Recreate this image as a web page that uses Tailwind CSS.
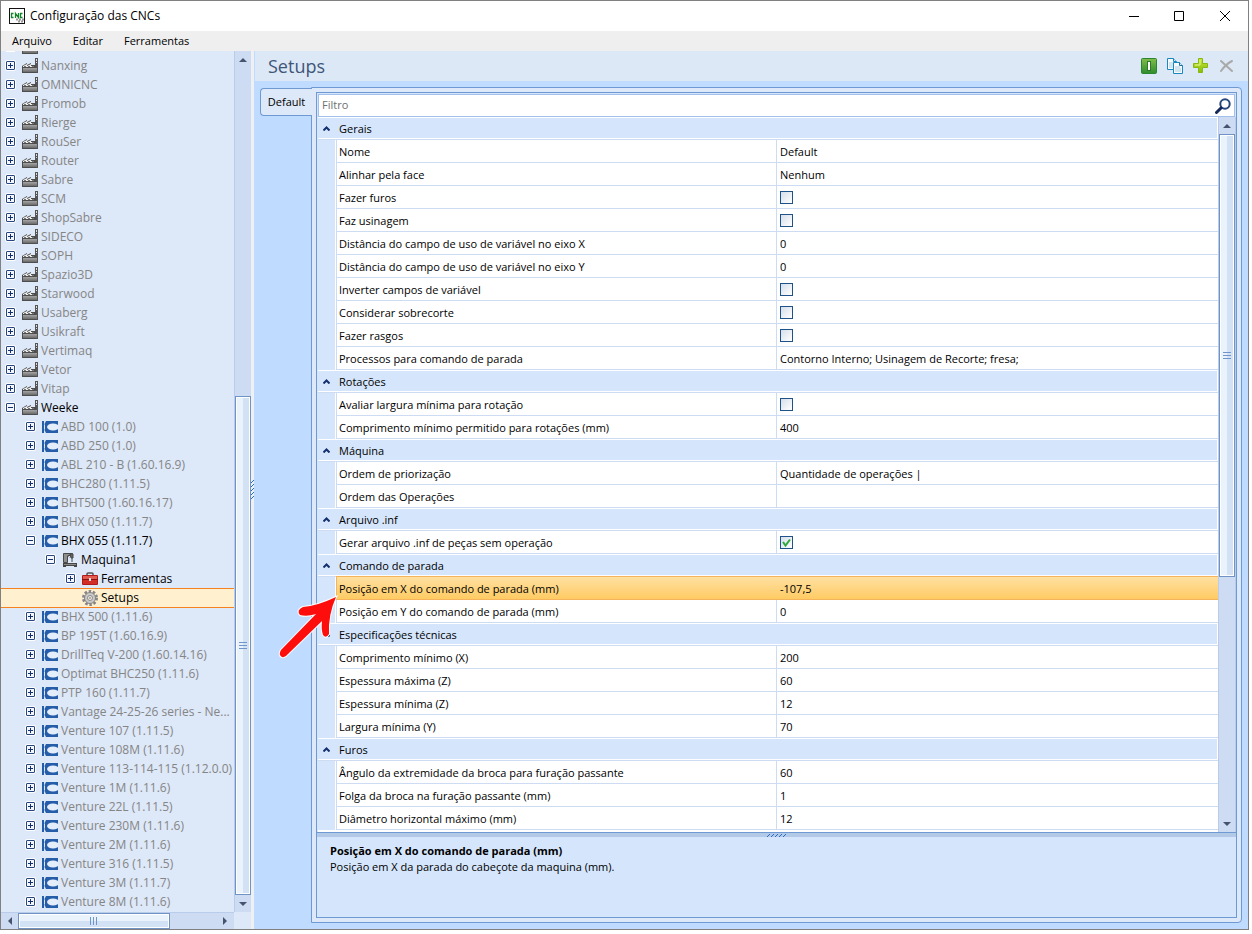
<!DOCTYPE html>
<html lang="pt-BR">
<head>
    <meta charset="UTF-8">
    <meta name="viewport" content="width=device-width, initial-scale=1.0">
    <title>Configuração das CNCs</title>
    <script src="https://cdn.jsdelivr.net/npm/@tailwindcss/browser@4"></script>
</head>
<body class="flex h-screen bg-white pr-[3px] pb-1 font-['Open_Sans','Noto_Sans',sans-serif] text-[11px] text-black">
    <svg class="absolute h-0 w-0">
        <defs>
            <linearGradient id="metal" x1="0" y1="0" x2="0" y2="1">
                <stop offset="0" stop-color="#a5a5a5"/>
                <stop offset="1" stop-color="#6a6a6a"/>
            </linearGradient>
            <linearGradient id="green" x1="0" y1="0" x2="0" y2="1">
                <stop offset="0" stop-color="#80bd4c"/>
                <stop offset="1" stop-color="#2f8c2c"/>
            </linearGradient>
            <linearGradient id="lime" x1="0" y1="0" x2="0" y2="1">
                <stop offset="0" stop-color="#c8e638"/>
                <stop offset="1" stop-color="#86bd0c"/>
            </linearGradient>
        </defs>
        <symbol id="icon-factory" viewBox="0 0 16 16">
            <path d="M13 0h3v15h-3z" fill="#555"/>
            <path d="M14 1h1v2h-1zM14 4h1v1h-1z" fill="#ddd"/>
            <path d="M0 15V8l5-3v2l4-2v2h5v8z" fill="#4d4d4d"/>
            <path d="M1 8l4-2v2l4-2v2h3v1H1z" fill="#ededed"/>
            <path d="M2 8.500h2M6 8.500h2M10 8.500h2" stroke="#777"/>
            <path d="M1 10h14v4H1z" fill="url(#metal)"/>
        </symbol>
        <symbol id="icon-model" viewBox="0 0 16 16">
            <path d="M0 2h2v4l2-4h12v12H4l-2-4v4H0z" fill="#255da9"/>
            <path d="M2 6l1-1v6l-1-1z" fill="#dde8f8"/>
            <ellipse cx="11" cy="8" rx="6" ry="3.500" fill="#e4edfa"/>
        </symbol>
        <symbol id="icon-machine" viewBox="0 0 16 16">
            <path d="M1.500 1.500h9v2h-5v7h-4z" fill="#8f8f8f" stroke="#484848"/>
            <path d="M5.500 3.500l2 2" stroke="#999"/>
            <path d="M8 2h3v4H9zM10 6v4" fill="#666" stroke="#484848"/>
            <path d="M1 11h14v4h-3v-1H4v1H1z" fill="#454545"/>
            <path d="M2 12.500h12" stroke="#8c8c8c"/>
        </symbol>
        <symbol id="icon-toolbox" viewBox="0 0 16 16">
            <path d="M5 5V3q0-1 1-1h4q1 0 1 1v2" fill="none" stroke="#555" stroke-width="1.500"/>
            <rect x="0" y="4" width="16" height="10" rx="1" fill="#b01c1c"/>
            <path d="M1 5h14v3H1z" fill="#e35a50"/>
            <path d="M1 9h14v4H1z" fill="#d22e28"/>
            <path d="M0 8.500h16" stroke="#8b1111"/>
            <path d="M7 7h2v3H7z" fill="#f6e0dc"/>
        </symbol>
        <symbol id="icon-gear" viewBox="0 0 16 16">
            <circle cx="8" cy="8" r="6.500" fill="none" stroke="#868686" stroke-width="3" stroke-dasharray="2.400 1.680"/>
            <circle cx="8" cy="8" r="5.500" fill="#c9c9c9" stroke="#858585"/>
            <circle cx="8" cy="8" r="2.500" fill="#ececec" stroke="#8c8c8c"/>
            <circle cx="8" cy="8" r="1" fill="#b09a72"/>
        </symbol>
        <symbol id="icon-grip" viewBox="0 0 8 8">
            <path d="M0 1.500h8M0 4.500h8M0 7.500h8" stroke="#6e95cc"/>
        </symbol>
    </svg>

    <div class="relative flex min-w-0 grow flex-col border border-[#808080] bg-white">
        <header class="flex h-[30px] shrink-0 items-center pl-2">
            <svg class="h-4 w-4" viewBox="0 0 16 16">
                <rect x=".5" y=".5" width="15" height="15" fill="#fff" stroke="#111"/>
                <path d="M4.500 5.500H2.500V9.500H4.500M6.500 10V5.500L9.500 9.500V5M13.500 5.500H11.500V9.500H13.500" fill="none" stroke="#14862a" stroke-width="1.300"/>
                <path d="M7 11.500h8M9 13.500h6" stroke="#999" stroke-width="2" stroke-dasharray="2 1"/>
            </svg>
            <h1 class="ml-[5px] grow text-xs">Configuração das CNCs</h1>
            <button class="flex h-full w-11 items-center justify-center" aria-label="Minimizar">
                <svg class="h-[10px] w-[10px]" viewBox="0 0 10 10"><path d="M0 5.500h10" stroke="#000"/></svg>
            </button>
            <button class="flex h-full w-[46px] items-center justify-center" aria-label="Maximizar">
                <svg class="h-[10px] w-[10px]" viewBox="0 0 10 10"><path d="M.5.5h9v9h-9z" fill="none" stroke="#000"/></svg>
            </button>
            <button class="flex h-full w-[46px] items-center justify-center" aria-label="Fechar">
                <svg class="h-[10px] w-[10px]" viewBox="0 0 10 10"><path d="M0 0l10 10M10 0L0 10" stroke="#000"/></svg>
            </button>
        </header>

        <nav class="flex h-5 shrink-0 items-center gap-[21px] bg-[#efefef] pl-[11px]">
            <button>Arquivo</button>
            <button>Editar</button>
            <button>Ferramentas</button>
        </nav>

        <div class="flex min-h-0 grow bg-[#bfdbff]">
            <aside class="flex w-[250px] shrink-0 flex-col bg-[#dde8f8]">
                <div class="flex min-h-0 grow">
                    <ul id="tree" class="flex min-w-0 grow flex-col justify-end overflow-hidden pb-px text-xs text-[#858585]"></ul>
                    <div class="flex w-[17px] shrink-0 flex-col border-l border-[#b9cdea] bg-[#cddcf3]">
                        <button class="flex h-[17px] shrink-0 items-center justify-center" aria-label="Rolar para cima">
                            <svg class="h-1 w-2" viewBox="0 0 8 4"><path d="M0 4l4-4 4 4z" fill="#47536e"/></svg>
                        </button>
                        <div class="flex grow flex-col justify-end">
                            <div class="flex h-[60.4%] items-center justify-center border border-[#6f93c4] bg-linear-to-r from-[#eaf2fc] from-50% to-[#d3e1f5] to-50% shadow-[inset_0_0_0_1px_#fff]">
                                <svg class="h-2 w-2"><use href="#icon-grip"/></svg>
                            </div>
                        </div>
                        <button class="flex h-[17px] shrink-0 items-center justify-center" aria-label="Rolar para baixo">
                            <svg class="h-1 w-2" viewBox="0 0 8 4"><path d="M0 0l4 4 4-4z" fill="#47536e"/></svg>
                        </button>
                    </div>
                </div>
                <div class="flex h-[17px] shrink-0">
                    <div class="flex grow border-t border-[#b9cdea] bg-[#cddcf3]">
                        <button class="flex w-[17px] items-center justify-center" aria-label="Rolar para a esquerda">
                            <svg class="h-2 w-1" viewBox="0 0 4 8"><path d="M4 0L0 4l4 4z" fill="#47536e"/></svg>
                        </button>
                        <div class="grow">
                            <div class="flex h-full w-[77%] items-center justify-center border border-[#6f93c4] bg-linear-to-b from-[#eaf2fc] from-50% to-[#d3e1f5] to-50% shadow-[inset_0_0_0_1px_#fff]">
                                <svg class="h-2 w-2 rotate-90"><use href="#icon-grip"/></svg>
                            </div>
                        </div>
                        <button class="flex w-[18px] items-center justify-center" aria-label="Rolar para a direita">
                            <svg class="h-2 w-1" viewBox="0 0 4 8"><path d="M0 0l4 4-4 4z" fill="#47536e"/></svg>
                        </button>
                    </div>
                    <div class="w-[17px]"></div>
                </div>
            </aside>

            <div class="flex w-[3px] shrink-0 items-center bg-[#eef0f2]">
                <svg class="h-5 w-[3px]" viewBox="0 0 3 20">
                    <path d="M0 3l3-3M0 7l3-3M0 11l3-3M0 15l3-3M0 19l3-3" stroke="#2b6cc4"/>
                </svg>
            </div>

            <main class="flex min-w-0 grow flex-col border-l border-[#bfdbff]">
                <div class="flex h-[30px] shrink-0 items-center gap-[10px] bg-[#dde8f6] px-[13px]">
                    <h2 class="grow text-lg text-[#3f5678]">Setups</h2>
                    <button aria-label="Ativar">
                        <svg class="h-4 w-4" viewBox="0 0 16 16">
                            <rect x=".5" y=".5" width="15" height="15" rx="1" fill="url(#green)" stroke="#2c852f"/>
                            <path d="M6 3h4v10H6z" fill="#2c7a28"/>
                            <path d="M7 4h2v8H7z" fill="#fff"/>
                        </svg>
                    </button>
                    <button aria-label="Copiar">
                        <svg class="h-4 w-4" viewBox="0 0 16 16">
                            <path d="M.5.500h6l3 3v8h-9z" fill="#f4fafd" stroke="#1c87be"/>
                            <path d="M2 5h4M2 7h4M2 9h4" stroke="#a8cfe2"/>
                            <path d="M6.500.5v3h3" fill="#d5ecf8" stroke="#1c87be"/>
                            <path d="M6.500 4.500h6l3 3v8h-9z" fill="#f4fafd" stroke="#1c87be"/>
                            <path d="M12.500 4.500v3h3" fill="#d5ecf8" stroke="#1c6da0"/>
                            <path d="M8 9h5M8 11h6M8 13h6" stroke="#a8cfe2"/>
                        </svg>
                    </button>
                    <button aria-label="Adicionar">
                        <svg class="h-4 w-4" viewBox="0 0 16 16">
                            <path d="M5.500.5h4v5h5v4h-5v5h-4v-5h-5v-4h5z" fill="url(#lime)" stroke="#86b812"/>
                            <path d="M7 2v5H2" fill="none" stroke="#e6f694"/>
                        </svg>
                    </button>
                    <button aria-label="Remover">
                        <svg class="h-4 w-4" viewBox="0 0 16 16">
                            <path d="M2 3l11 10M13 3Q7 6 2 13" fill="none" stroke="#a9a9a9" stroke-width="2" stroke-linecap="round"/>
                        </svg>
                    </button>
                </div>

                <div class="flex min-h-0 grow pt-1.5 pr-1.5 pb-1.5 pl-[5px]">
                    <button class="z-10 mt-px -mr-px h-7 w-[52px] shrink-0 rounded-l border border-r-0 border-[#6f99d2] bg-[#dde8f8]">Default</button>
                    <section class="flex min-w-0 grow rounded-r border border-[#6f99d2] bg-[#dde8f8] p-1">
                        <div class="flex min-w-0 grow flex-col border border-[#6f99d2] bg-[#d5e6fc]">
                            <label class="m-px mb-0 flex h-[23px] shrink-0 items-center border border-[#a3c0ec] bg-white pr-[3px]">
                                <input type="text" placeholder="Filtro" aria-label="Filtro" class="min-w-0 grow bg-transparent px-[3px] text-[11px] outline-none placeholder:text-[#707070]">
                                <svg class="h-4 w-4" viewBox="0 0 16 16">
                                    <circle cx="10" cy="6" r="4.700" fill="#fff" stroke="#25467e" stroke-width="2"/>
                                    <path d="M6 10l-4.500 4.500" stroke="#14285c" stroke-width="3" stroke-linecap="round"/>
                                </svg>
                            </label>
                            <div class="flex min-h-0 grow pl-px">
                                <div class="min-w-0 grow overflow-hidden bg-white">
                                    <table class="w-full table-fixed border-separate border-spacing-0 text-left leading-none">
                                        <colgroup>
                                            <col class="w-[18px]">
                                            <col>
                                            <col>
                                        </colgroup>
                                        <tbody id="properties"></tbody>
                                    </table>
                                </div>
                                <div class="flex w-[18px] shrink-0 flex-col border-x border-[#b9cdea] bg-[#cddcf3]">
                                    <button class="flex h-[17px] shrink-0 items-center justify-center" aria-label="Rolar para cima">
                                        <svg class="h-1 w-2" viewBox="0 0 8 4"><path d="M0 4l4-4 4 4z" fill="#47536e"/></svg>
                                    </button>
                                    <div class="grow">
                                        <div class="flex h-[65%] items-center justify-center border border-[#6f93c4] bg-linear-to-r from-[#eaf2fc] from-50% to-[#d3e1f5] to-50% shadow-[inset_0_0_0_1px_#fff]">
                                            <svg class="h-2 w-2"><use href="#icon-grip"/></svg>
                                        </div>
                                    </div>
                                    <button class="flex h-[17px] shrink-0 items-center justify-center" aria-label="Rolar para baixo">
                                        <svg class="h-1 w-2" viewBox="0 0 8 4"><path d="M0 0l4 4 4-4z" fill="#47536e"/></svg>
                                    </button>
                                </div>
                            </div>
                            <div class="flex h-[5px] shrink-0 items-center justify-center border-t border-[#6f99d2] bg-[#b3c9e8]">
                                <svg class="h-[3px] w-5" viewBox="0 0 20 3">
                                    <path d="M0 3l3-3M4 3l3-3M8 3l3-3M12 3l3-3M16 3l3-3" stroke="#2b6cc4"/>
                                </svg>
                            </div>
                            <div class="h-20 shrink-0 px-[13px] pt-1.5">
                                <p class="leading-4 font-bold">Posição em X do comando de parada (mm)</p>
                                <p class="leading-4">Posição em X da parada do cabeçote da maquina (mm).</p>
                            </div>
                        </div>
                    </section>
                </div>
            </main>
        </div>

        <!-- Arrow pointing at the selected property -->
        <svg class="pointer-events-none absolute top-[594px] left-[276px] z-20 h-16 w-16" viewBox="0 0 64 64">
            <path d="M59 2Q40 11 26 12Q19 15 23 20Q30 22 39 19L4 55Q1 60 5 62Q8 63 11 59L45 26Q44 34 46 40Q49 44 52 39Q51 20 59 2z" fill="#fe0d0d" stroke="#fff" stroke-width="2" paint-order="stroke"/>
        </svg>
    </div>

    <script>
        // [depth, icon, label, state]
        const tree = [
            ...['', 'Nanxing', 'OMNICNC', 'Promob', 'Rierge', 'RouSer', 'Router', 'Sabre', 'SCM',
                'ShopSabre', 'SIDECO', 'SOPH', 'Spazio3D', 'Starwood', 'Usaberg', 'Usikraft', 'Vertimaq',
                'Vetor', 'Vitap'].map(name => [0, 'factory', name, 'closed']),
            [0, 'factory', 'Weeke', 'open'],
            ...['ABD 100 (1.0)', 'ABD 250 (1.0)', 'ABL 210 - B (1.60.16.9)', 'BHC280 (1.11.5)',
                'BHT500 (1.60.16.17)', 'BHX 050 (1.11.7)'].map(name => [1, 'model', name, 'closed']),
            [1, 'model', 'BHX 055 (1.11.7)', 'open'],
            [2, 'machine', 'Maquina1', 'open'],
            [3, 'toolbox', 'Ferramentas', 'closed'],
            [3, 'gear', 'Setups', 'selected'],
            ...['BHX 500 (1.11.6)', 'BP 195T (1.60.16.9)', 'DrillTeq V-200 (1.60.14.16)',
                'Optimat BHC250 (1.11.6)', 'PTP 160 (1.11.7)', 'Vantage 24-25-26 series - Ne...',
                'Venture 107 (1.11.5)', 'Venture 108M (1.11.6)', 'Venture 113-114-115 (1.12.0.0)',
                'Venture 1M (1.11.6)', 'Venture 22L (1.11.5)', 'Venture 230M (1.11.6)', 'Venture 2M (1.11.6)',
                'Venture 316 (1.11.5)', 'Venture 3M (1.11.7)', 'Venture 8M (1.11.6)'].map(name => [1, 'model', name, 'closed']),
        ];
        const indent = ['pl-[5px]', 'pl-[25px]', 'pl-[45px]', 'pl-[65px]'];

        const properties = [
            ['Gerais', [
                ['Nome', 'Default'],
                ['Alinhar pela face', 'Nenhum'],
                ['Fazer furos', false],
                ['Faz usinagem', false],
                ['Distância do campo de uso de variável no eixo X', '0'],
                ['Distância do campo de uso de variável no eixo Y', '0'],
                ['Inverter campos de variável', false],
                ['Considerar sobrecorte', false],
                ['Fazer rasgos', false],
                ['Processos para comando de parada', 'Contorno Interno; Usinagem de Recorte; fresa;'],
            ]],
            ['Rotações', [
                ['Avaliar largura mínima para rotação', false],
                ['Comprimento mínimo permitido para rotações (mm)', '400'],
            ]],
            ['Máquina', [
                ['Ordem de priorização', 'Quantidade de operações |'],
                ['Ordem das Operações', ''],
            ]],
            ['Arquivo .inf', [
                ['Gerar arquivo .inf de peças sem operação', true],
            ]],
            ['Comando de parada', [
                ['Posição em X do comando de parada (mm)', '-107,5', 'selected'],
                ['Posição em Y do comando de parada (mm)', '0'],
            ]],
            ['Especificações técnicas', [
                ['Comprimento mínimo (X)', '200'],
                ['Espessura máxima (Z)', '60'],
                ['Espessura mínima (Z)', '12'],
                ['Largura mínima (Y)', '70'],
            ]],
            ['Furos', [
                ['Ângulo da extremidade da broca para furação passante', '60'],
                ['Folga da broca na furação passante (mm)', '1'],
                ['Diâmetro horizontal máximo (mm)', '12'],
            ]],
        ];

        document.getElementById('tree').innerHTML = tree.map(([depth, icon, label, state]) => {
            const isSelected = state === 'selected';
            const isActive = isSelected || state === 'open' || depth === 3;
            const expander = isSelected ? '<span class="w-[9px]"></span>' : `
                <button class="h-[9px] w-[9px] shrink-0 rounded-[1px] bg-white outline outline-white" aria-label="Expandir ${label}">
                    <svg class="h-[9px] w-[9px]" viewBox="0 0 9 9">
                        <path d="M.5.5h8v8h-8z" fill="#f4f8fe" stroke="#27467f"/>
                        <path d="${state === 'open' ? 'M2 4.500h5' : 'M2 4.500h5M4.500 2v5'}" stroke="#142f6e"/>
                    </svg>
                </button>`;
            return `
                <li class="relative flex h-[19px] shrink-0 items-center whitespace-nowrap ${indent[depth]} ${isActive ? 'text-black' : ''} ${isSelected ? 'bg-[#fff0cf] shadow-[inset_0_1px_#f58220,0_1px_#f58220]' : ''}">
                    ${expander}
                    <svg class="mr-[3px] ml-[7px] h-4 w-4 shrink-0"><use href="#icon-${icon}"/></svg>
                    <span>${label}</span>
                </li>`;
        }).join('');

        let fieldCount = 0;

        function renderValue(id, value) {
            if (typeof value !== 'boolean') {
                return value;
            }
            return `
                <span class="relative block h-[13px] w-[13px]">
                    <input type="checkbox" id="${id}" ${value ? 'checked' : ''} class="peer block h-[13px] w-[13px] appearance-none border border-[#1f5289] bg-linear-to-br from-[#d6deea] to-white">
                    <svg class="pointer-events-none absolute inset-0 hidden peer-checked:block" viewBox="0 0 13 13">
                        <path d="M3 6l2.500 3.500L10 3.500" fill="none" stroke="#2fa83c" stroke-width="2"/>
                    </svg>
                </span>`;
        }

        function renderRow([label, value, state]) {
            const id = `field${fieldCount++}`;
            const cell = state === 'selected'
                ? 'bg-linear-to-b from-[#ffe0a0] to-[#ffcb62] border-[#f5b35c] shadow-[0_-1px_#f5b35c]'
                : 'border-[#cddcf2]';
            const text = typeof value === 'boolean' ? `<label for="${id}">${label}</label>` : label;
            return `
                <tr class="h-[23px]">
                    <td class="border-r border-white bg-[#d5e6fc]"></td>
                    <th class="border-b border-l py-0 pl-[2px] font-normal ${state === 'selected' ? '' : 'border-r'} ${cell}">${text}</th>
                    <td class="border-b py-0 pl-[3px] ${cell}">${renderValue(id, value)}</td>
                </tr>`;
        }

        document.getElementById('properties').innerHTML = properties.map(([title, rows]) => `
            <tr class="h-[23px]">
                <th colspan="3" class="border-b border-b-[#cddcf2] p-0 font-normal">
                    <button class="flex h-[22px] w-full items-center border-y border-r border-white bg-[#d5e6fc] pl-[5px]">
                        <svg class="mr-[9px] h-[5px] w-[7px]" viewBox="0 0 7 5"><path d="M0.500 4.500l3-3 3 3" fill="none" stroke="#14316e" stroke-width="2"/></svg>
                        ${title}
                    </button>
                </th>
            </tr>
            ${rows.map(renderRow).join('')}
        `).join('');
    </script>
</body>
</html>
